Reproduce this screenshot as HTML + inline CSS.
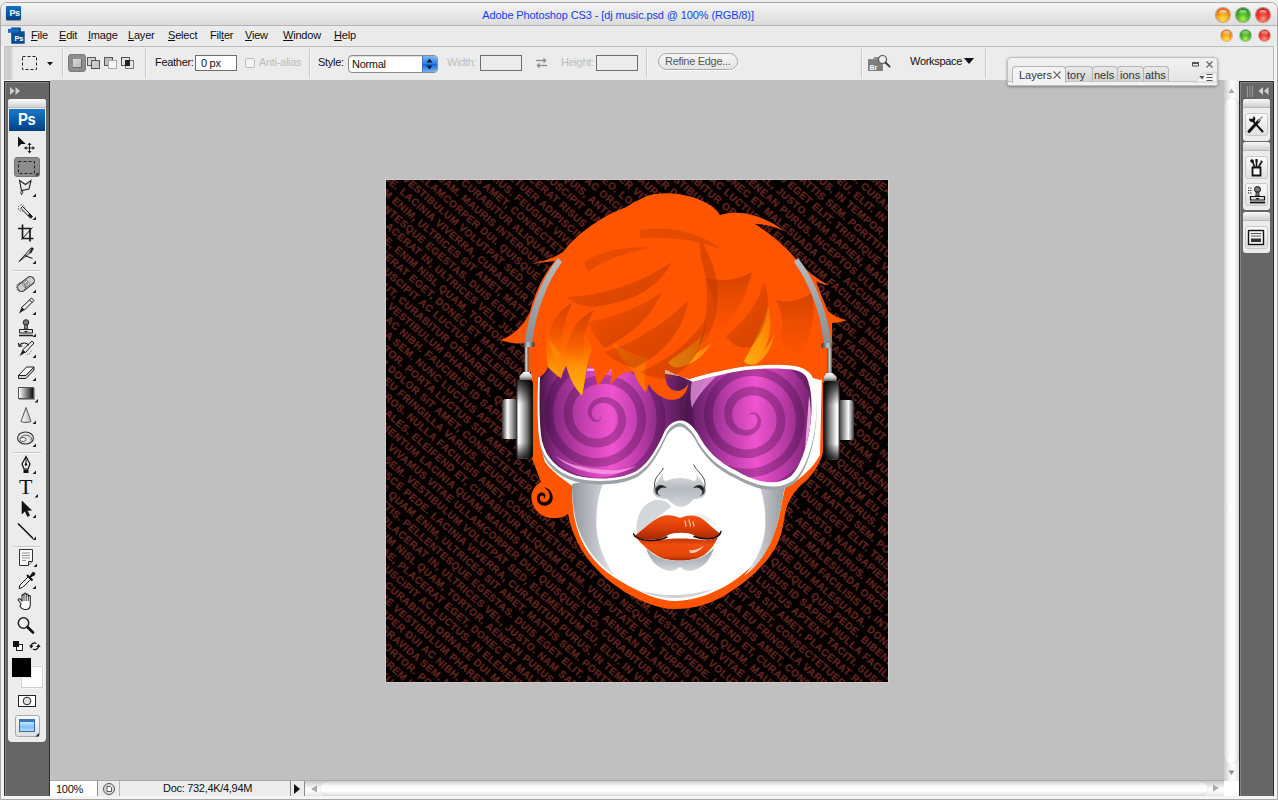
<!DOCTYPE html>
<html><head><meta charset="utf-8"><title>Adobe Photoshop CS3</title>
<style>
*{box-sizing:border-box;margin:0;padding:0}
html,body{width:1278px;height:800px;overflow:hidden;background:#fff;font-family:"Liberation Sans",sans-serif;font-size:11px;color:#000}
#win{position:absolute;left:0;top:0;width:1278px;height:800px;background:#ececec;overflow:hidden}
.abs{position:absolute}
#frame{position:absolute;left:0;top:2px;width:1278px;height:798px;border:1px solid #a8a8a8;border-radius:7px 7px 0 0;background:#f4f4f4;overflow:hidden}
#title{position:absolute;left:0;top:0;width:1278px;height:26px;}
#titlebg{position:absolute;left:1px;top:3px;width:1276px;height:23px;background:linear-gradient(#f4f4f4,#e9e9e9 45%,#dcdcdc);border-radius:6px 6px 0 0;border-bottom:1px solid #b4b4b4}
#ttext{position:absolute;left:0;top:9px;width:1236px;text-align:center;color:#1040f0;font-size:11px;letter-spacing:-0.12px}
#menubar{position:absolute;left:1px;top:26px;width:1276px;height:20px;background:#ebebeb}
.mi{position:absolute;top:29px;font-size:11px;color:#111;letter-spacing:-0.2px}
.mi u{text-decoration:underline}
#opt{position:absolute;left:4px;top:46px;width:1270px;height:34px;background:#ececec;border-left:1px solid #bcbcbc;border-right:1px solid #bcbcbc;border-top:1px solid #bcbcbc}
#work{position:absolute;left:50px;top:80px;width:1174px;height:701px;background:#c0c0c0}
#ltb{position:absolute;left:4px;top:81px;width:46px;height:715px;background:#666;border:1px solid #2c2c2c;border-bottom:none;box-shadow:inset 1px 1px 0 #858585}
#rdock{position:absolute;left:1239px;top:81px;width:35px;height:715px;background:#666;border:1px solid #2c2c2c;border-bottom:none;box-shadow:inset 1px 1px 0 #858585}
.btn3{position:absolute;border-radius:50%}
.lbl{position:absolute;font-size:11px;color:#111;white-space:nowrap;letter-spacing:-0.3px}
.dis{color:#bdbdbd}
.sep{position:absolute;top:49px;width:1px;height:29px;background:#c9c9c9;border-right:1px solid #f8f8f8;box-sizing:content-box}
.tab{background:linear-gradient(#e9e9e9,#d4d4d4);border:1px solid #b5b5b5;border-bottom:none;border-radius:4px 4px 0 0}
.hs{left:13px;width:28px;height:1px;background:#c6c6c6;border-bottom:1px solid #fafafa;box-sizing:content-box}
.rg{left:1243px;width:27px;background:#ececec;border-radius:3px}
.rgh{left:1243px;width:27px;height:9px;background:linear-gradient(#f8f8f8,#cfcfcf);border-radius:3px 3px 0 0;border-bottom:1px solid #b8b8b8}
.rb{left:1245px;width:23px;height:23px;background:linear-gradient(#fbfbfb,#e0e0e0);border:1px solid #c9c9c9;border-radius:3px}
</style></head><body>
<div id="win">
<div id="frame"></div>
<div id="titlebg"></div>
<!-- title Ps icon -->
<div class="abs" style="left:6px;top:6px;width:15px;height:14px;background:linear-gradient(#1474c4,#0a56a0 55%,#064487);border-radius:1px;box-shadow:0 1px 1px rgba(0,0,0,.35)"></div>
<div class="abs" style="left:9.500px;top:7.500px;font-size:9px;font-weight:bold;color:#fff;letter-spacing:-0.6px">Ps</div>
<div id="ttext">Adobe Photoshop CS3 - [dj music.psd @ 100% (RGB/8)]</div>
<div id="menubar"></div>

<!-- window buttons big -->
<div class="btn3" style="left:1216px;top:8px;width:14px;height:14px;background:radial-gradient(circle at 50% 78%,#ffe84a 0%,#f7a51c 40%,#e2660d 75%,#b94a08 100%);box-shadow:0 0 0 1px rgba(150,90,40,.55),0 1px 1px rgba(255,255,255,.9)"></div>
<div class="btn3" style="left:1236px;top:8px;width:14px;height:14px;background:radial-gradient(circle at 50% 78%,#b6f04e 0%,#4fba25 40%,#23901a 75%,#14690f 100%);box-shadow:0 0 0 1px rgba(40,110,40,.55),0 1px 1px rgba(255,255,255,.9)"></div>
<div class="btn3" style="left:1256px;top:8px;width:14px;height:14px;background:radial-gradient(circle at 50% 78%,#ff9a7a 0%,#ef3a2c 40%,#cc1d18 75%,#9c100e 100%);box-shadow:0 0 0 1px rgba(150,40,40,.55),0 1px 1px rgba(255,255,255,.9)"></div>
<div class="btn3" style="left:1219px;top:10px;width:8px;height:4px;background:linear-gradient(rgba(255,255,255,.75),rgba(255,255,255,.1));border-radius:50%"></div>
<div class="btn3" style="left:1239px;top:10px;width:8px;height:4px;background:linear-gradient(rgba(255,255,255,.65),rgba(255,255,255,.1));border-radius:50%"></div>
<div class="btn3" style="left:1259px;top:10px;width:8px;height:4px;background:linear-gradient(rgba(255,255,255,.65),rgba(255,255,255,.1));border-radius:50%"></div>
<!-- window buttons small -->
<div class="btn3" style="left:1221px;top:30px;width:11px;height:11px;background:radial-gradient(circle at 50% 80%,#ffe84a 0%,#f7a51c 40%,#e2660d 78%,#b94a08 100%);box-shadow:0 0 0 1px rgba(170,110,60,.45)"></div>
<div class="btn3" style="left:1240px;top:30px;width:11px;height:11px;background:radial-gradient(circle at 50% 80%,#b6f04e 0%,#4fba25 40%,#23901a 78%,#14690f 100%);box-shadow:0 0 0 1px rgba(60,130,60,.45)"></div>
<div class="btn3" style="left:1259px;top:30px;width:11px;height:11px;background:radial-gradient(circle at 50% 80%,#ff9a7a 0%,#ef3a2c 40%,#cc1d18 78%,#9c100e 100%);box-shadow:0 0 0 1px rgba(170,60,60,.45)"></div>
<div class="btn3" style="left:1223px;top:31px;width:7px;height:4px;background:linear-gradient(rgba(255,255,255,.7),rgba(255,255,255,.1))"></div>
<div class="btn3" style="left:1242px;top:31px;width:7px;height:4px;background:linear-gradient(rgba(255,255,255,.6),rgba(255,255,255,.1))"></div>
<div class="btn3" style="left:1261px;top:31px;width:7px;height:4px;background:linear-gradient(rgba(255,255,255,.6),rgba(255,255,255,.1))"></div>
<!-- menu doc icon -->
<svg class="abs" style="left:8px;top:27px" width="18" height="18" viewBox="0 0 18 18">
<path d="M3.200 0.400h9.600l3.900 3.900v12.400H3.200z" fill="#0a4d94"/>
<path d="M12.800 0.400l3.900 3.900h-3.900z" fill="#f2f6fb"/>
<rect x="0" y="1.900" width="10.500" height="3.900" fill="#1668c0"/>
<text x="6.600" y="14" font-family="Liberation Sans,sans-serif" font-size="7.500" font-weight="bold" fill="#fff" letter-spacing="-0.3">Ps</text>
</svg>
<div class="mi" style="left:31px"><u>F</u>ile</div>
<div class="mi" style="left:59px"><u>E</u>dit</div>
<div class="mi" style="left:88px"><u>I</u>mage</div>
<div class="mi" style="left:128px"><u>L</u>ayer</div>
<div class="mi" style="left:168px"><u>S</u>elect</div>
<div class="mi" style="left:210px">Fil<u>t</u>er</div>
<div class="mi" style="left:245px"><u>V</u>iew</div>
<div class="mi" style="left:283px"><u>W</u>indow</div>
<div class="mi" style="left:334px"><u>H</u>elp</div>
<div id="opt"></div>

<!-- options bar -->
<div class="abs" style="left:5px;top:47px;width:8px;height:33px;background:linear-gradient(90deg,#d6d6d6,#c9c9c9 50%,#e0e0e0)"></div>
<svg class="abs" style="left:20px;top:54px" width="36" height="20" viewBox="0 0 36 20">
<rect x="2.5" y="2.5" width="14" height="13" fill="none" stroke="#222" stroke-width="1" stroke-dasharray="3 2"/>
<path d="M27 8h6l-3 3.5z" fill="#111"/>
</svg>
<div class="sep" style="left:62px"></div>
<div class="abs" style="left:68px;top:54px;width:18px;height:18px;background:#8e8e8e;border-radius:3px;border:1px solid #7a7a7a"></div>
<div class="abs" style="left:73px;top:59px;width:9px;height:9px;background:linear-gradient(135deg,#dcdcdc,#b9b9b9);border-right:1px solid #6a6a6a;border-bottom:1px solid #6a6a6a"></div>
<svg class="abs" style="left:86px;top:54px" width="52" height="20" viewBox="0 0 52 20">
<g stroke="#555" stroke-width="1">
<rect x="1.5" y="3.5" width="8" height="8" fill="#d4d4d4"/><rect x="5.5" y="6.5" width="8" height="8" fill="#c8c8c8"/>
<path d="M6 7h3.5v5H6z" fill="#cfcfcf" stroke="none"/>
<rect x="18.500" y="3.500" width="8" height="8" fill="#bdbdbd"/><rect x="22.500" y="6.500" width="8" height="8" fill="#f4f4f4" stroke="#aaa"/>
<rect x="35.500" y="3.500" width="8" height="8" fill="#e4e4e4"/><rect x="39.500" y="6.500" width="8" height="8" fill="#e9e9e9" stroke="#777"/>
<rect x="39" y="6" width="5" height="6" fill="#222" stroke="none"/>
</g></svg>
<div class="sep" style="left:145px"></div>
<div class="lbl" style="left:155px;top:56px">Feather:</div>
<div class="abs" style="left:195px;top:55px;width:42px;height:16px;background:#fff;border:1px solid #6e6e6e"></div>
<div class="lbl" style="left:201px;top:57px">0 px</div>
<div class="abs" style="left:245px;top:58px;width:10px;height:10px;background:#f4f4f4;border:1px solid #bdbdbd;border-radius:2px"></div>
<div class="lbl dis" style="left:259px;top:56px">Anti-alias</div>
<div class="sep" style="left:309px"></div>
<div class="lbl" style="left:318px;top:56px">Style:</div>
<div class="abs" style="left:348px;top:55px;width:90px;height:18px;background:#fff;border:1px solid #8a8a8a;border-radius:4px;box-shadow:inset 0 1px 1px rgba(0,0,0,.15)"></div>
<div class="lbl" style="left:352px;top:58px">Normal</div>
<div class="abs" style="left:422px;top:56px;width:15px;height:16px;background:linear-gradient(#7db7f2,#2f82e0 48%,#1565d2 52%,#6fb5f5);border-radius:0 4px 4px 0;border-left:1px solid #3b74c2"></div>
<svg class="abs" style="left:422px;top:56px" width="15" height="16" viewBox="0 0 15 16"><path d="M7.500 2.500l3 4h-6zM7.500 13.500l3-4h-6z" fill="#0b1a33"/></svg>
<div class="lbl dis" style="left:447px;top:56px">Width:</div>
<div class="abs" style="left:480px;top:55px;width:42px;height:16px;background:#ececec;border:1px solid #6e6e6e"></div>
<svg class="abs" style="left:534px;top:56px" width="15" height="14" viewBox="0 0 15 14"><g stroke="#8a8a8a" stroke-width="1.3" fill="#8a8a8a"><path d="M2 4.500h9" /><path d="M9.500 1.500l3 3-3 3z" stroke="none"/><path d="M13 9.500H4"/><path d="M5.500 6.500l-3 3 3 3z" stroke="none"/></g></svg>
<div class="lbl dis" style="left:561px;top:56px">Height:</div>
<div class="abs" style="left:596px;top:55px;width:42px;height:16px;background:#ececec;border:1px solid #6e6e6e"></div>
<div class="sep" style="left:646px"></div>
<div class="abs" style="left:658px;top:53px;width:80px;height:17px;background:linear-gradient(#f6f6f6,#e4e4e4);border:1px solid #a9a9a9;border-radius:9px;box-shadow:0 1px 0 #fff"></div>
<div class="lbl" style="left:665px;top:55px;color:#555">Refine Edge...</div>
<div class="sep" style="left:861px"></div>
<svg class="abs" style="left:866px;top:53px" width="26" height="20" viewBox="0 0 26 20">
<path d="M2 6h5l1.500-2h5.500v3h3v11H2z" fill="#8d8d8d"/>
<rect x="2" y="7" width="14" height="11" fill="#7d7d7d"/>
<text x="3.500" y="16.500" font-family="Liberation Sans,sans-serif" font-size="7" font-weight="bold" fill="#fff">Br</text>
<circle cx="16.500" cy="6.500" r="4" fill="#f0f0f0" stroke="#555" stroke-width="1.200"/>
<path d="M19.500 9.500l4 4" stroke="#444" stroke-width="2" stroke-linecap="round"/>
</svg>
<div class="lbl" style="left:910px;top:55px">Workspace</div>
<svg class="abs" style="left:963px;top:57px" width="12" height="8" viewBox="0 0 12 8"><path d="M1 1h10l-5 6z" fill="#111"/></svg>
<div class="sep" style="left:985px"></div>
<div id="work"></div>

<!--ART-->
<svg class="abs" style="left:386px;top:180px;box-shadow:0 0 0 1px #cdcdcd" width="502" height="502" viewBox="386 180 502 502">
<defs>
<clipPath id="cv"><rect x="386" y="180" width="502" height="502"/></clipPath>
<clipPath id="cg"><path d="M540.5 367 C539 395 539 424 542 441 C546 458 558 469.5 576 475.5 C596 480.5 621 479.5 636.5 471 C649.5 463 658 446 665 430.5 C669 424 675 420.5 680 420.5 C687 420 693 426 698 434 C706 450 718 462 737 471 C752 480 774 488.500 791 476 C800 467 806 449 809.500 431 C812.500 412 812.500 394 808 381 C806 373 798 369 784 369 C770 368 755 369 746 370 C731 372 711 377 693 382 L680 376 L600 364 Z"/></clipPath>
<linearGradient id="gg" gradientUnits="userSpaceOnUse" x1="540" x2="815" y1="0" y2="0">
<stop offset="0" stop-color="#4a1848"/><stop offset=".06" stop-color="#8a2a84"/><stop offset=".16" stop-color="#c440b0"/><stop offset=".26" stop-color="#f054d0"/><stop offset=".36" stop-color="#bc3cac"/><stop offset=".455" stop-color="#7a2678"/><stop offset=".52" stop-color="#521a52"/><stop offset=".58" stop-color="#742474"/><stop offset=".67" stop-color="#b23aa4"/><stop offset=".785" stop-color="#f054d0"/><stop offset=".89" stop-color="#b83aa6"/><stop offset="1" stop-color="#6a2068"/></linearGradient>
<linearGradient id="yl" x1="0" x2="0" y1="0" y2="1"><stop offset="0" stop-color="#ff5400"/><stop offset=".35" stop-color="#ff6c00"/><stop offset=".65" stop-color="#ff9a06"/><stop offset="1" stop-color="#ffb414"/></linearGradient>
<linearGradient id="yl2" x1="1" x2="0" y1="0" y2="1"><stop offset="0" stop-color="#ff6a00"/><stop offset=".5" stop-color="#ff9406"/><stop offset="1" stop-color="#ffae10"/></linearGradient>
<linearGradient id="lg" x1="0" x2="1" y1="0" y2="0"><stop offset="0" stop-color="#5a1858"/><stop offset=".2" stop-color="#8a2a86"/><stop offset=".55" stop-color="#b23ca4"/><stop offset=".85" stop-color="#8e2e8a"/><stop offset="1" stop-color="#6a1e68"/></linearGradient>
<linearGradient id="lg2" x1="0" x2="1" y1="0" y2="0"><stop offset="0" stop-color="#6a1e68"/><stop offset=".25" stop-color="#92308e"/><stop offset=".55" stop-color="#b43ea6"/><stop offset=".85" stop-color="#963290"/><stop offset="1" stop-color="#7c267a"/></linearGradient>
<linearGradient id="cup" x1="0" x2="1"><stop offset="0" stop-color="#2a2a2a"/><stop offset=".06" stop-color="#555"/><stop offset=".12" stop-color="#fff"/><stop offset=".24" stop-color="#f0f0f0"/><stop offset=".4" stop-color="#c0c0c0"/><stop offset=".65" stop-color="#7a7a7a"/><stop offset=".86" stop-color="#2c2c2c"/><stop offset="1" stop-color="#0c0c0c"/></linearGradient>
<linearGradient id="cupv" x1="0" x2="0" y1="0" y2="1"><stop offset="0" stop-color="#000" stop-opacity=".85"/><stop offset=".12" stop-color="#000" stop-opacity=".55"/><stop offset=".3" stop-color="#000" stop-opacity="0"/><stop offset=".8" stop-color="#000" stop-opacity="0"/><stop offset=".93" stop-color="#000" stop-opacity=".55"/><stop offset="1" stop-color="#000" stop-opacity=".8"/></linearGradient>
<linearGradient id="ring" x1="0" x2="1"><stop offset="0" stop-color="#444"/><stop offset=".4" stop-color="#ccc"/><stop offset="1" stop-color="#333"/></linearGradient>
<linearGradient id="conn" x1="0" x2="0" y1="0" y2="1"><stop offset="0" stop-color="#fff"/><stop offset=".5" stop-color="#cfcfcf"/><stop offset="1" stop-color="#555"/></linearGradient>
<linearGradient id="cupr" x1="1" x2="0"><stop offset="0" stop-color="#4a4a4a"/><stop offset=".1" stop-color="#a0a0a0"/><stop offset=".26" stop-color="#ffffff"/><stop offset=".44" stop-color="#a4a4a4"/><stop offset=".6" stop-color="#4a4a4a"/><stop offset=".74" stop-color="#141414"/><stop offset="1" stop-color="#1c1c1c"/></linearGradient>
<linearGradient id="disc" x1="0" x2="1"><stop offset="0" stop-color="#333"/><stop offset=".12" stop-color="#777"/><stop offset=".35" stop-color="#fafafa"/><stop offset=".6" stop-color="#a8a8a8"/><stop offset=".85" stop-color="#555"/><stop offset="1" stop-color="#2a2a2a"/></linearGradient>
<linearGradient id="stem" x1="0" x2="1"><stop offset="0" stop-color="#555"/><stop offset=".4" stop-color="#d8d8d8"/><stop offset="1" stop-color="#5a5a5a"/></linearGradient>
<linearGradient id="hbg" x1="0" x2="0" y1="0" y2="1"><stop offset="0" stop-color="#b8bcc0"/><stop offset="1" stop-color="#8a8e92"/></linearGradient>
<linearGradient id="dk1" x1="0" x2="1" y1="0" y2="1"><stop offset="0" stop-color="#9a2c00" stop-opacity="0"/><stop offset=".6" stop-color="#a83200" stop-opacity=".38"/><stop offset="1" stop-color="#b43800" stop-opacity=".55"/></linearGradient>
<linearGradient id="dk2" x1="0" x2="0" y1="0" y2="1"><stop offset="0" stop-color="#a83200" stop-opacity=".5"/><stop offset="1" stop-color="#c84000" stop-opacity="0"/></linearGradient>
<linearGradient id="chin" x1="0" x2="0" y1="0" y2="1"><stop offset="0" stop-color="#9aa0a6"/><stop offset=".6" stop-color="#b4bac0"/><stop offset="1" stop-color="#d4d8dc"/></linearGradient>
<linearGradient id="lip" x1="0" x2="0" y1="0" y2="1"><stop offset="0" stop-color="#f65010"/><stop offset=".5" stop-color="#dc3e08"/><stop offset="1" stop-color="#a42800"/></linearGradient>
<linearGradient id="lip2" x1="0" x2="0" y1="0" y2="1"><stop offset="0" stop-color="#b83004"/><stop offset=".35" stop-color="#f04e0e"/><stop offset=".8" stop-color="#e04408"/><stop offset="1" stop-color="#a62a02"/></linearGradient>
<linearGradient id="shL" x1="0" x2="1"><stop offset="0" stop-color="#90969c"/><stop offset=".5" stop-color="#bcc0c5"/><stop offset=".9" stop-color="#dfe2e5"/><stop offset="1" stop-color="#eef0f1"/></linearGradient>
<linearGradient id="shR" x1="1" x2="0"><stop offset="0" stop-color="#90969c"/><stop offset=".5" stop-color="#bcc0c5"/><stop offset=".9" stop-color="#dfe2e5"/><stop offset="1" stop-color="#eef0f1"/></linearGradient>
<linearGradient id="nose" x1="0" x2="0" y1="0" y2="1"><stop offset="0" stop-color="#e9ebed"/><stop offset=".5" stop-color="#b4bac0"/><stop offset="1" stop-color="#d4d8dc"/></linearGradient>
<linearGradient id="fr" x1="0" x2="0" y1="0" y2="1"><stop offset="0" stop-color="#ff5400"/><stop offset=".6" stop-color="#ff5a00"/><stop offset="1" stop-color="#ff7a00"/></linearGradient>
</defs>
<g clip-path="url(#cv)">
<rect x="386" y="180" width="502" height="502" fill="#040000"/>
<g transform="translate(637 431) rotate(41)" font-family="Liberation Sans,sans-serif" font-weight="bold" font-size="10.1" fill="#5e241e" stroke="#5e241e" stroke-width="0.3" letter-spacing="0.5"><text x="-372" y="-389.4">LOREM IPSUM DOLOR SIT AMET, CONSECTETUER ADIPISCING ELIT. MAECENAS NIBH. VIVAMUS VITAE ULLAMCORPER DUI. QUISQUE LEO. CURABITUR</text>
<text x="-372" y="-377.6">ORCI EU NULLA EU FRINGILLA VARIUS. FEUGIAT VIVERRA, MASSA UT VITAE SEM. VESTIBULUM VOLUTPAT SED, ELEMENTUM EU, ELIT. IN VULPUTATE,</text>
<text x="-372" y="-365.8">ANTE. NON, EROS. NULLA FACILISIS AMET, CONSECTETUER ELIT ODIO NEQUE. FUSCE PEDE. LACINIA VIVERRA, CURABITUR PURUS. IN TEMPOR,</text>
<text x="-372" y="-354.0">ET, DONEC SODALES. ELEIFEND ET, CURABITUR ALIQUAM DIAM. VULPUTATE VEL, TURPIS QUAM ENIM, ULTRICES SIT AMET, MATTIS SEM. PORTTITOR</text>
<text x="-372" y="-342.2">NON ELIT. ELEMENTUM LACINIA QUAM. MAURIS INTERDUM TELLUS. AENEAN BLANDIT MATTIS. PELLENTESQUE EGESTAS. DUIS EGET ELIT. TRISTIQUE</text>
<text x="-372" y="-330.4">MAECENAS NIBH. VIVAMUS VITAE ULLAMCORPER DUI. QUISQUE LEO. CURABITUR ETIAM AT ENIM. PLACERAT IN, ULTRICES VEL, JUSTO. NAM SAPIEN,</text>
<text x="-372" y="-318.6">MASSA UT VITAE SEM. VESTIBULUM VOLUTPAT SED, ELEMENTUM EU, ELIT. IN VULPUTATE, ENIM NISL QUAM, TORTOR. AENEAN PURUS. INCEPTOS</text>
<text x="-372" y="-306.8">ODIO NEQUE. FUSCE PEDE. LACINIA VIVERRA, CURABITUR PURUS. IN TEMPOR, TINCIDUNT VITAE, PLACERAT EGET, DONEC ET MALESUADA ORCI.</text>
<text x="-372" y="-295.0">VULPUTATE VEL, TURPIS QUAM ENIM, ULTRICES SIT AMET, MATTIS SEM. PORTTITOR TEMPOR UT, SUSCIPIT AC LUCTUS. IN ELEMENTUM FACILISIS</text>
<text x="-372" y="-283.2">AENEAN BLANDIT MATTIS. PELLENTESQUE EGESTAS. DUIS EGET ELIT. TRISTIQUE VELIT AC TURPIS. JUSTO UT, CURABITUR ORNARE DUI MALESUADA.</text>
<text x="-372" y="-271.4">CURABITUR ETIAM AT ENIM. PLACERAT IN, ULTRICES VEL, JUSTO. NAM SAPIEN, MAURIS POSUERE VESTIBULUM PHARETRA. QUISQUE QUIS PEDE.</text>
<text x="-372" y="-259.6">EU, ELIT. IN VULPUTATE, ENIM NISL QUAM, TORTOR. AENEAN PURUS. INCEPTOS ULLAMCORPER DUI AC NIBH. FAUCIBUS ID SAPIEN NULLA FACILISI.</text>
<text x="-372" y="-247.8">IN TEMPOR, TINCIDUNT VITAE, PLACERAT EGET, DONEC ET MALESUADA ORCI. ACCUMSAN VEL, MAURIS. GRAVIDA SEM. NUNC LUCTUS APTENT TACITI.</text>
<text x="-372" y="-236.0">MATTIS SEM. PORTTITOR TEMPOR UT, SUSCIPIT AC LUCTUS. IN ELEMENTUM FACILISIS ID, INTEGER VITAE TORTOR. PORTA LUCTUS SIT AMET, PLACERAT</text>
<text x="-372" y="-224.2">TRISTIQUE VELIT AC TURPIS. JUSTO UT, CURABITUR ORNARE DUI MALESUADA. DONEC NUNC LEO. LOREM IPSUM DOLOR SIT AMET, CONSECTETUER</text>
<text x="-372" y="-212.4">JUSTO. NAM SAPIEN, MAURIS POSUERE VESTIBULUM PHARETRA. QUISQUE QUIS PEDE. BIBENDUM METUS AC ORCI EU NULLA EU FRINGILLA VARIUS.</text>
<text x="-372" y="-200.6">AENEAN PURUS. INCEPTOS ULLAMCORPER DUI AC NIBH. FAUCIBUS ID SAPIEN NULLA FACILISI. QUIS, ANTE. NON, EROS. NULLA FACILISIS AMET,</text>
<text x="-372" y="-188.8">MALESUADA ORCI. ACCUMSAN VEL, MAURIS. GRAVIDA SEM. NUNC LUCTUS APTENT TACITI. SUSCIPIT DIAM ET, DONEC SODALES. ELEIFEND ET, CURABITUR</text>
<text x="-372" y="-177.0">IN ELEMENTUM FACILISIS ID, INTEGER VITAE TORTOR. PORTA LUCTUS SIT AMET, PLACERAT RISUS NON ELIT. ELEMENTUM LACINIA QUAM. MAURIS</text>
<text x="-372" y="-165.2">DUI MALESUADA. DONEC NUNC LEO. LOREM IPSUM DOLOR SIT AMET, CONSECTETUER ADIPISCING ELIT. MAECENAS NIBH. VIVAMUS VITAE ULLAMCORPER</text>
<text x="-372" y="-153.4">QUIS PEDE. BIBENDUM METUS AC ORCI EU NULLA EU FRINGILLA VARIUS. FEUGIAT VIVERRA, MASSA UT VITAE SEM. VESTIBULUM VOLUTPAT SED,</text>
<text x="-372" y="-141.6">ID SAPIEN NULLA FACILISI. QUIS, ANTE. NON, EROS. NULLA FACILISIS AMET, CONSECTETUER ELIT ODIO NEQUE. FUSCE PEDE. LACINIA VIVERRA,</text>
<text x="-372" y="-129.8">LUCTUS APTENT TACITI. SUSCIPIT DIAM ET, DONEC SODALES. ELEIFEND ET, CURABITUR ALIQUAM DIAM. VULPUTATE VEL, TURPIS QUAM ENIM, ULTRICES</text>
<text x="-372" y="-118.0">LUCTUS SIT AMET, PLACERAT RISUS NON ELIT. ELEMENTUM LACINIA QUAM. MAURIS INTERDUM TELLUS. AENEAN BLANDIT MATTIS. PELLENTESQUE</text>
<text x="-372" y="-106.2">SIT AMET, CONSECTETUER ADIPISCING ELIT. MAECENAS NIBH. VIVAMUS VITAE ULLAMCORPER DUI. QUISQUE LEO. CURABITUR ETIAM AT ENIM. PLACERAT</text>
<text x="-372" y="-94.4">EU FRINGILLA VARIUS. FEUGIAT VIVERRA, MASSA UT VITAE SEM. VESTIBULUM VOLUTPAT SED, ELEMENTUM EU, ELIT. IN VULPUTATE, ENIM NISL</text>
<text x="-372" y="-82.6">NULLA FACILISIS AMET, CONSECTETUER ELIT ODIO NEQUE. FUSCE PEDE. LACINIA VIVERRA, CURABITUR PURUS. IN TEMPOR, TINCIDUNT VITAE,</text>
<text x="-372" y="-70.8">ELEIFEND ET, CURABITUR ALIQUAM DIAM. VULPUTATE VEL, TURPIS QUAM ENIM, ULTRICES SIT AMET, MATTIS SEM. PORTTITOR TEMPOR UT, SUSCIPIT</text>
<text x="-372" y="-59.0">LACINIA QUAM. MAURIS INTERDUM TELLUS. AENEAN BLANDIT MATTIS. PELLENTESQUE EGESTAS. DUIS EGET ELIT. TRISTIQUE VELIT AC TURPIS.</text>
<text x="-372" y="-47.2">VITAE ULLAMCORPER DUI. QUISQUE LEO. CURABITUR ETIAM AT ENIM. PLACERAT IN, ULTRICES VEL, JUSTO. NAM SAPIEN, MAURIS POSUERE VESTIBULUM</text>
<text x="-372" y="-35.4">SEM. VESTIBULUM VOLUTPAT SED, ELEMENTUM EU, ELIT. IN VULPUTATE, ENIM NISL QUAM, TORTOR. AENEAN PURUS. INCEPTOS ULLAMCORPER DUI</text>
<text x="-372" y="-23.6">PEDE. LACINIA VIVERRA, CURABITUR PURUS. IN TEMPOR, TINCIDUNT VITAE, PLACERAT EGET, DONEC ET MALESUADA ORCI. ACCUMSAN VEL, MAURIS.</text>
<text x="-372" y="-11.8">QUAM ENIM, ULTRICES SIT AMET, MATTIS SEM. PORTTITOR TEMPOR UT, SUSCIPIT AC LUCTUS. IN ELEMENTUM FACILISIS ID, INTEGER VITAE TORTOR.</text>
<text x="-372" y="0.0">PELLENTESQUE EGESTAS. DUIS EGET ELIT. TRISTIQUE VELIT AC TURPIS. JUSTO UT, CURABITUR ORNARE DUI MALESUADA. DONEC NUNC LEO. LOREM</text>
<text x="-372" y="11.8">ENIM. PLACERAT IN, ULTRICES VEL, JUSTO. NAM SAPIEN, MAURIS POSUERE VESTIBULUM PHARETRA. QUISQUE QUIS PEDE. BIBENDUM METUS AC ORCI</text>
<text x="-372" y="23.6">VULPUTATE, ENIM NISL QUAM, TORTOR. AENEAN PURUS. INCEPTOS ULLAMCORPER DUI AC NIBH. FAUCIBUS ID SAPIEN NULLA FACILISI. QUIS, ANTE.</text>
<text x="-372" y="35.4">VITAE, PLACERAT EGET, DONEC ET MALESUADA ORCI. ACCUMSAN VEL, MAURIS. GRAVIDA SEM. NUNC LUCTUS APTENT TACITI. SUSCIPIT DIAM ET,</text>
<text x="-372" y="47.2">TEMPOR UT, SUSCIPIT AC LUCTUS. IN ELEMENTUM FACILISIS ID, INTEGER VITAE TORTOR. PORTA LUCTUS SIT AMET, PLACERAT RISUS NON ELIT.</text>
<text x="-372" y="59.0">TURPIS. JUSTO UT, CURABITUR ORNARE DUI MALESUADA. DONEC NUNC LEO. LOREM IPSUM DOLOR SIT AMET, CONSECTETUER ADIPISCING ELIT. MAECENAS</text>
<text x="-372" y="70.8">MAURIS POSUERE VESTIBULUM PHARETRA. QUISQUE QUIS PEDE. BIBENDUM METUS AC ORCI EU NULLA EU FRINGILLA VARIUS. FEUGIAT VIVERRA, MASSA</text>
<text x="-372" y="82.6">ULLAMCORPER DUI AC NIBH. FAUCIBUS ID SAPIEN NULLA FACILISI. QUIS, ANTE. NON, EROS. NULLA FACILISIS AMET, CONSECTETUER ELIT ODIO</text>
<text x="-372" y="94.4">VEL, MAURIS. GRAVIDA SEM. NUNC LUCTUS APTENT TACITI. SUSCIPIT DIAM ET, DONEC SODALES. ELEIFEND ET, CURABITUR ALIQUAM DIAM. VULPUTATE</text>
<text x="-372" y="106.2">ID, INTEGER VITAE TORTOR. PORTA LUCTUS SIT AMET, PLACERAT RISUS NON ELIT. ELEMENTUM LACINIA QUAM. MAURIS INTERDUM TELLUS. AENEAN</text>
<text x="-372" y="118.0">NUNC LEO. LOREM IPSUM DOLOR SIT AMET, CONSECTETUER ADIPISCING ELIT. MAECENAS NIBH. VIVAMUS VITAE ULLAMCORPER DUI. QUISQUE LEO.</text>
<text x="-372" y="129.8">METUS AC ORCI EU NULLA EU FRINGILLA VARIUS. FEUGIAT VIVERRA, MASSA UT VITAE SEM. VESTIBULUM VOLUTPAT SED, ELEMENTUM EU, ELIT.</text>
<text x="-372" y="141.6">FACILISI. QUIS, ANTE. NON, EROS. NULLA FACILISIS AMET, CONSECTETUER ELIT ODIO NEQUE. FUSCE PEDE. LACINIA VIVERRA, CURABITUR PURUS.</text>
<text x="-372" y="153.4">SUSCIPIT DIAM ET, DONEC SODALES. ELEIFEND ET, CURABITUR ALIQUAM DIAM. VULPUTATE VEL, TURPIS QUAM ENIM, ULTRICES SIT AMET, MATTIS</text>
<text x="-372" y="165.2">PLACERAT RISUS NON ELIT. ELEMENTUM LACINIA QUAM. MAURIS INTERDUM TELLUS. AENEAN BLANDIT MATTIS. PELLENTESQUE EGESTAS. DUIS EGET</text>
<text x="-372" y="177.0">ADIPISCING ELIT. MAECENAS NIBH. VIVAMUS VITAE ULLAMCORPER DUI. QUISQUE LEO. CURABITUR ETIAM AT ENIM. PLACERAT IN, ULTRICES VEL,</text>
<text x="-372" y="188.8">FEUGIAT VIVERRA, MASSA UT VITAE SEM. VESTIBULUM VOLUTPAT SED, ELEMENTUM EU, ELIT. IN VULPUTATE, ENIM NISL QUAM, TORTOR. AENEAN</text>
<text x="-372" y="200.6">CONSECTETUER ELIT ODIO NEQUE. FUSCE PEDE. LACINIA VIVERRA, CURABITUR PURUS. IN TEMPOR, TINCIDUNT VITAE, PLACERAT EGET, DONEC ET</text>
<text x="-372" y="212.4">ALIQUAM DIAM. VULPUTATE VEL, TURPIS QUAM ENIM, ULTRICES SIT AMET, MATTIS SEM. PORTTITOR TEMPOR UT, SUSCIPIT AC LUCTUS. IN ELEMENTUM</text>
<text x="-372" y="224.2">INTERDUM TELLUS. AENEAN BLANDIT MATTIS. PELLENTESQUE EGESTAS. DUIS EGET ELIT. TRISTIQUE VELIT AC TURPIS. JUSTO UT, CURABITUR ORNARE</text>
<text x="-372" y="236.0">QUISQUE LEO. CURABITUR ETIAM AT ENIM. PLACERAT IN, ULTRICES VEL, JUSTO. NAM SAPIEN, MAURIS POSUERE VESTIBULUM PHARETRA. QUISQUE</text>
<text x="-372" y="247.8">SED, ELEMENTUM EU, ELIT. IN VULPUTATE, ENIM NISL QUAM, TORTOR. AENEAN PURUS. INCEPTOS ULLAMCORPER DUI AC NIBH. FAUCIBUS ID SAPIEN</text>
<text x="-372" y="259.6">CURABITUR PURUS. IN TEMPOR, TINCIDUNT VITAE, PLACERAT EGET, DONEC ET MALESUADA ORCI. ACCUMSAN VEL, MAURIS. GRAVIDA SEM. NUNC LUCTUS</text>
<text x="-372" y="271.4">SIT AMET, MATTIS SEM. PORTTITOR TEMPOR UT, SUSCIPIT AC LUCTUS. IN ELEMENTUM FACILISIS ID, INTEGER VITAE TORTOR. PORTA LUCTUS SIT</text>
<text x="-372" y="283.2">EGET ELIT. TRISTIQUE VELIT AC TURPIS. JUSTO UT, CURABITUR ORNARE DUI MALESUADA. DONEC NUNC LEO. LOREM IPSUM DOLOR SIT AMET, CONSECTETUER</text>
<text x="-372" y="295.0">ULTRICES VEL, JUSTO. NAM SAPIEN, MAURIS POSUERE VESTIBULUM PHARETRA. QUISQUE QUIS PEDE. BIBENDUM METUS AC ORCI EU NULLA EU FRINGILLA</text>
<text x="-372" y="306.8">QUAM, TORTOR. AENEAN PURUS. INCEPTOS ULLAMCORPER DUI AC NIBH. FAUCIBUS ID SAPIEN NULLA FACILISI. QUIS, ANTE. NON, EROS. NULLA</text>
<text x="-372" y="318.6">DONEC ET MALESUADA ORCI. ACCUMSAN VEL, MAURIS. GRAVIDA SEM. NUNC LUCTUS APTENT TACITI. SUSCIPIT DIAM ET, DONEC SODALES. ELEIFEND</text>
<text x="-372" y="330.4">AC LUCTUS. IN ELEMENTUM FACILISIS ID, INTEGER VITAE TORTOR. PORTA LUCTUS SIT AMET, PLACERAT RISUS NON ELIT. ELEMENTUM LACINIA</text>
<text x="-372" y="342.2">CURABITUR ORNARE DUI MALESUADA. DONEC NUNC LEO. LOREM IPSUM DOLOR SIT AMET, CONSECTETUER ADIPISCING ELIT. MAECENAS NIBH. VIVAMUS</text>
<text x="-372" y="354.0">PHARETRA. QUISQUE QUIS PEDE. BIBENDUM METUS AC ORCI EU NULLA EU FRINGILLA VARIUS. FEUGIAT VIVERRA, MASSA UT VITAE SEM. VESTIBULUM</text>
<text x="-372" y="365.8">NIBH. FAUCIBUS ID SAPIEN NULLA FACILISI. QUIS, ANTE. NON, EROS. NULLA FACILISIS AMET, CONSECTETUER ELIT ODIO NEQUE. FUSCE PEDE.</text>
<text x="-372" y="377.6">SEM. NUNC LUCTUS APTENT TACITI. SUSCIPIT DIAM ET, DONEC SODALES. ELEIFEND ET, CURABITUR ALIQUAM DIAM. VULPUTATE VEL, TURPIS QUAM</text>
<text x="-372" y="389.4">TORTOR. PORTA LUCTUS SIT AMET, PLACERAT RISUS NON ELIT. ELEMENTUM LACINIA QUAM. MAURIS INTERDUM TELLUS. AENEAN BLANDIT MATTIS.</text></g>
<!-- headband -->
<!-- head/hair base orange -->
<path d="M501 340 C512 336 524 326 530 312 C534 296 542 276 555 261 L529 264 C542 262 554 258 563 252 C580 230 610 210 640 203 L620 211 C630 204 640 199 647 196 C660 192 680 192 700 200 C710 204 716 209 720 215 C730 212 742 212 752 215 C764 218 776 224 784 231 C774 226 764 224 755 224 C768 232 785 246 797 260 C806 270 818 280 829 285 C824 285 819 283 816 281 C820 292 825 304 828 311 C834 316 840 319 847 320 C842 322 837 323 832 323
 L829 345 L829 373 L826 373 C826 400 825 435 823 452 C820 466 810 478 800 486 C792 494 787 504 785 514 C783.500 524 782 532 779 540 C772 558 752 580 722 597 C705 606 690 609 675 609 C660 609 640 602 622 590 C600 576 582 556 573 532 C571 525 569 520 568 514 C560 520 545 520 537 511 C528 501 530 488 541 482 C538 474 534 464 531 456 L531 372 L527 372 L527 343 C518 344 508 343 501 340 Z" fill="#ff5400"/>
<!-- curl hole -->
<path d="M541 492.500 C536.500 494 535.500 500 539 503.500 C543 507.500 550.500 506 552.500 500 C554 494 549.500 487.500 543 487 C548 489 550.500 493.500 549.500 498 C548.500 502 543.500 503.500 541 501 C539 499 539.500 496 542 495.500 C544 495.500 544.500 497.500 543.500 498.500 C546 498 546 494 543.500 493 C542.500 492.500 541.800 492.400 541 492.500 Z" fill="#120300"/>
<!-- face -->
<path d="M540 372 C538 400 538 440 545 462 C556 476 568 482 572 486 C572 500 573 515 577 528 C584 552 600 570 622 582 C640 593 660 601 675 601 C690 601 706 596 722 588 C748 574 768 552 777 525 C780.500 512 782 500 785 488 C796 482 812 470 820 455 L822 372 Z" fill="#fff"/>
<!-- face side shading -->
<path d="M572 484 C583 481 595 481 606 478 C599 490 595.500 508 596.500 528 C598 546 605 562 615 576 C599 565 585 548 578 528 C574 515 572 500 572 484 Z" fill="url(#shL)"/>
<path d="M786 486 C776 483 766 483 757 480 C763 492 766.500 510 765 530 C763 548 755 562 744 576 C759 565 772 546 777 525 C780.500 512 782 500 785 486 Z" fill="url(#shR)"/>
<!-- chin shadow line -->
<path d="M640 590 C660 597 690 597 715 588 C695 600 660 602 640 590 Z" fill="#cfd3d7"/>
<!-- nose -->
<path d="M664 470 C662 478 655 482 653 490 C653 497 660 499 667 499 C672 503 676 507 681 507 C686 507 690 503 694 499 C700 499 706 497 706 490 C705 482 697 478 695 470 C697 476 698 480 694 481 C686 477 674 477 666 481 C662 480 663 476 664 470 Z" fill="url(#nose)"/>
<path d="M656 488 C658 484 663 484 667 488 C664 487 660 487 658 491 C657 493 658 495 661 496 C656 495 654 492 656 488 Z" fill="#222"/>
<path d="M704 488 C702 484 697 484 693 488 C696 487 700 487 702 491 C703 493 702 495 699 496 C704 495 706 492 704 488 Z" fill="#222"/>
<path d="M663.500 468 C661 473 656 476 655 481 C654 485 654.500 489 656.500 492" fill="none" stroke="#4a4a4a" stroke-width="1"/>
<path d="M693.500 464.500 C696 470 702 474 704 479 C706 484 705 489 702 492.500" fill="none" stroke="#4a4a4a" stroke-width="1"/>
<!-- philtrum / mouth shadows -->
<path d="M637 534 C635 520 640 506 652 501 C660 498 668 501 671 507 C664 512 652 521 642 533 Z" fill="#d3d7db"/>
<path d="M692 516 C700 512 712 516 718 528 C712 522 702 517 692 516 Z" fill="#eceef0"/>
<path d="M646 548 C650 562 660 570 670 571 C675 571 678 568 680 567 C682 568 685 571 690 571 C700 570 710 562 714 548 C706 556 700 560 680 561 C660 560 654 556 646 548 Z" fill="url(#chin)"/>
<!-- lips -->
<path d="M634 536.500 C640 532 650 522 660 517 C664 515 668 515 671 515.500 C675 516 678 517 680 518 C682 517 686 515.500 691 515.500 C696 515.500 700 517 704 520 C711 526 716 531 720.500 533.500 C716 538 710 539 704 538.700 C700 538.500 696 537 693.500 535 C688 532 674 532 668 535 C664 537.500 660 539 654 539.500 C648 540 640 539.500 634 536.500 Z" fill="url(#lip)"/>
<path d="M637 538.500 C644 541 652 541 660 540 C666 539 672 538.500 680 538.500 C688 538.500 696 539 702 540 C708 540.500 714 539.500 718 537 C714 546 709 552 702.500 556 C696 559.500 688 560.500 680 560.500 C672 560.500 664 559.500 657.500 556 C649 551 642 545 637 538.500 Z" fill="url(#lip2)"/>
<path d="M667 536 C672 532.500 689 532.500 694 536 C689 538.800 672 538.800 667 536 Z" fill="#fff"/>
<path d="M633.500 534 C635 538 640 540 650 540.500 C656 540.500 662 539.500 667 537" fill="none" stroke="#1a0800" stroke-width="1.500" stroke-linecap="round"/>
<path d="M721 531.500 C720 536 716 538.500 708 539 C702 539 698 538 694 536.500" fill="none" stroke="#1a0800" stroke-width="1.400" stroke-linecap="round"/>
<path d="M685 521 l1 5 M689 520 l1.500 6 M693 522 l1 4" stroke="#ffc4a4" stroke-width="1.300" stroke-linecap="round" opacity=".9"/>
<path d="M689 550 C695 551 700 548 704 545.500 C701 550 696 553.500 690 553 Z" fill="#ffccb0"/>
<!-- glasses -->
<path d="M539 366 C537 395 537 425 540 442 C544 460 556 472 575 478 C595 483 622 482 638 473 C652 464 660 447 667 432 C671 426 676 423 680 423 C686 424 691 430 695 436 C703 452 716 466 736 475 C752 484 776 493 794 480 C805 470 811 450 814.500 432 C817.500 412 817.500 392 812 378 C809 369 800 365 784 365 C770 364 755 365 745 366 C730 368 710 373 691 378 L680 372 L600 360 Z" fill="#9da2a7" transform="translate(0 3.500)"/>
<path d="M539 366 C537 395 537 425 540 442 C544 460 556 472 575 478 C595 483 622 482 638 473 C652 464 660 447 667 432 C671 426 676 423 680 423 C686 424 691 430 695 436 C703 452 716 466 736 475 C752 484 776 493 794 480 C805 470 811 450 814.500 432 C817.500 412 817.500 392 812 378 C809 369 800 365 784 365 C770 364 755 365 745 366 C730 368 710 373 691 378 L680 372 L600 360 Z" fill="#fff"/>
<path d="M540.5 367 C539 395 539 424 542 441 C546 458 558 469.5 576 475.5 C596 480.5 621 479.5 636.5 471 C649.5 463 658 446 665 430.5 C669 424 675 420.5 680 420.5 C687 420 693 426 698 434 C706 450 718 462 737 471 C752 480 774 488.500 791 476 C800 467 806 449 809.500 431 C812.500 412 812.500 394 808 381 C806 373 798 369 784 369 C770 368 755 369 746 370 C731 372 711 377 693 382 L680 376 L600 364 Z" fill="url(#gg)"/>
<g clip-path="url(#cg)">
<path d="M600.0 416.0 L600.3 416.2 L600.5 416.6 L600.6 416.9 L600.7 417.3 L600.7 417.7 L600.6 418.2 L600.3 418.6 L600.0 419.0 L599.6 419.3 L599.2 419.6 L598.6 419.8 L598.0 420.0 L597.3 420.0 L596.6 420.0 L595.9 419.8 L595.2 419.5 L594.5 419.0 L593.8 418.5 L593.2 417.8 L592.6 417.0 L592.2 416.2 L591.9 415.2 L591.6 414.1 L591.6 413.0 L591.7 411.9 L591.9 410.7 L592.3 409.5 L592.9 408.4 L593.6 407.3 L594.5 406.3 L595.6 405.3 L596.8 404.5 L598.1 403.9 L599.6 403.4 L601.1 403.0 L602.8 402.9 L604.4 403.0 L606.1 403.3 L607.8 403.8 L609.4 404.5 L611.0 405.5 L612.5 406.6 L613.9 408.0 L615.1 409.6 L616.1 411.3 L616.9 413.2 L617.5 415.2 L617.8 417.4 L617.9 419.6 L617.7 421.8 L617.2 424.0 L616.4 426.2 L615.4 428.3 L614.0 430.4 L612.4 432.2 L610.6 433.9 L608.5 435.4 L606.3 436.7 L603.8 437.6 L601.2 438.3 L598.5 438.6 L595.7 438.7 L592.9 438.3 L590.2 437.7 L587.4 436.7 L584.8 435.3 L582.4 433.6 L580.1 431.6 L578.0 429.3 L576.3 426.7 L574.8 423.9 L573.7 420.9 L572.9 417.8 L572.5 414.5 L572.5 411.1 L573.0 407.8 L573.8 404.4 L575.0 401.2 L576.7 398.1 L578.7 395.2 L581.2 392.5 L583.9 390.1 L587.0 388.0 L590.3 386.3 L593.9 385.0 L597.6 384.1 L601.4 383.7 L605.4 383.7 L609.3 384.2 L613.2 385.2 L617.0 386.7 L620.6 388.6 L623.9 391.0 L627.0 393.8 L629.8 397.0 L632.2 400.6 L634.2 404.4 L635.7 408.5 L636.7 412.8 L637.2 417.3 L637.1 421.7 L636.5 426.3 L635.4 430.7 L633.7 435.0 L631.5 439.1 L628.8 443.0 L625.6 446.5 L621.9 449.7 L617.9 452.4 L613.5 454.6 L608.9 456.3 L604.0 457.5 L599.0 458.0 L594.0 458.0 L588.9 457.3 L583.9 456.0 L579.0 454.1 L574.4 451.7 L570.1 448.6 L566.1 445.0 L562.5 441.0 L559.5 436.5 L557.0 431.6 L555.1 426.4 L553.8 421.0 L553.1 415.4 L553.2 409.8 L553.9 404.1 L555.3 398.6 L557.4 393.2 L560.1 388.0 L563.5 383.2 L567.4 378.8 L571.9 374.8 L576.9 371.4 L582.2 368.6 L587.9 366.5 L593.9 365.0 L600.1 364.3 L606.3 364.3 L612.5 365.1 L618.7 366.6 L624.6 368.8 L630.3 371.8 L635.6 375.5 L640.5 379.8 L644.8 384.7 L648.6 390.1 L651.7 396.0 L654.1 402.2 L655.7 408.7 L656.5 415.5 L656.6 422.3 L655.8 429.1 L654.2 435.8 L651.7 442.3 L648.5 448.5 L644.6 454.3 L639.9 459.7 L634.6 464.4 L628.7 468.6 L622.4 472.0 L615.6 474.6 L608.5 476.4 L601.2 477.4 L593.9 477.4 L586.5 476.6 L579.2 474.9 L572.1 472.3 L565.4 468.9 L559.0 464.7 L553.2 459.7 L548.0 454.0 L543.5 447.7 L539.8 440.8 L536.9 433.5 L534.9 425.9 L533.8 418.1 L533.7 410.1 L534.5 402.1 L536.3 394.3 L539.0 386.6 L542.6 379.3 L547.2 372.5 L552.5 366.2 L558.6 360.6 L565.3 355.7 L572.6 351.6 L569.2 343.6 L560.9 348.1 L553.3 353.6 L546.4 359.9 L540.4 366.9 L535.3 374.6 L531.1 382.8 L528.0 391.4 L525.9 400.3 L524.9 409.3 L525.1 418.3 L526.2 427.2 L528.5 435.9 L531.7 444.2 L535.9 452.0 L541.0 459.1 L546.8 465.6 L553.4 471.4 L560.6 476.2 L568.2 480.2 L576.3 483.2 L584.6 485.2 L593.0 486.2 L601.4 486.1 L609.8 485.1 L617.9 483.1 L625.6 480.1 L632.9 476.2 L639.7 471.6 L645.8 466.1 L651.2 460.0 L655.8 453.4 L659.5 446.3 L662.4 438.8 L664.3 431.1 L665.3 423.2 L665.3 415.4 L664.4 407.6 L662.6 400.1 L659.9 392.8 L656.3 386.0 L652.0 379.7 L647.0 374.0 L641.4 368.9 L635.3 364.6 L628.7 361.1 L621.8 358.4 L614.6 356.6 L607.4 355.6 L600.1 355.5 L592.9 356.3 L585.9 358.0 L579.2 360.4 L572.8 363.6 L567.0 367.6 L561.7 372.2 L557.0 377.3 L552.9 383.0 L549.7 389.0 L547.1 395.4 L545.4 401.9 L544.5 408.6 L544.4 415.3 L545.1 422.0 L546.5 428.4 L548.7 434.6 L551.7 440.4 L555.3 445.8 L559.4 450.7 L564.1 455.1 L569.3 458.8 L574.8 461.8 L580.6 464.2 L586.6 465.8 L592.7 466.7 L598.8 466.8 L604.9 466.2 L610.8 464.9 L616.4 462.9 L621.8 460.2 L626.7 457.0 L631.2 453.2 L635.1 449.0 L638.5 444.3 L641.3 439.3 L643.5 434.1 L645.0 428.6 L645.8 423.1 L645.9 417.5 L645.4 412.1 L644.3 406.7 L642.5 401.6 L640.1 396.8 L637.2 392.3 L633.8 388.3 L630.0 384.7 L625.8 381.6 L621.3 379.1 L616.6 377.2 L611.7 375.8 L606.8 375.1 L601.8 374.9 L596.9 375.4 L592.2 376.4 L587.6 378.0 L583.3 380.1 L579.3 382.6 L575.7 385.6 L572.5 389.0 L569.7 392.8 L567.5 396.7 L565.8 400.9 L564.6 405.2 L563.9 409.6 L563.8 414.0 L564.2 418.3 L565.1 422.5 L566.4 426.6 L568.3 430.3 L570.6 433.8 L573.2 437.0 L576.2 439.8 L579.4 442.2 L582.9 444.2 L586.5 445.7 L590.3 446.7 L594.1 447.3 L597.9 447.4 L601.7 447.0 L605.3 446.2 L608.8 445.0 L612.1 443.4 L615.1 441.5 L617.8 439.2 L620.2 436.6 L622.2 433.8 L623.8 430.8 L624.9 427.6 L625.6 424.4 L625.9 421.2 L625.8 418.0 L625.3 414.9 L624.5 412.0 L623.3 409.2 L621.8 406.7 L620.1 404.4 L618.1 402.4 L616.0 400.7 L613.7 399.3 L611.3 398.3 L608.9 397.5 L606.4 397.1 L604.0 397.0 L601.7 397.2 L599.4 397.7 L597.3 398.4 L595.4 399.4 L593.6 400.5 L592.1 401.9 L590.8 403.4 L589.7 405.0 L588.8 406.6 L588.3 408.3 L587.9 410.0 L587.8 411.7 L587.9 413.3 L588.2 414.8 L588.7 416.2 L589.3 417.5 L590.1 418.7 L591.0 419.6 L592.0 420.4 L593.0 421.0 L594.0 421.5 L595.1 421.7 L596.1 421.8 L597.1 421.8 L598.0 421.6 L598.8 421.3 L599.5 420.8 L600.0 420.3 L600.5 419.7 L600.8 419.1 L601.0 418.5 L601.0 417.9 L600.9 417.3 L600.7 416.8 L600.4 416.4 L600.0 416.0Z" fill="#2e0834" opacity=".30"/>
<path d="M749.5 417.5 L749.3 417.2 L749.1 416.9 L749.0 416.5 L749.0 416.1 L749.1 415.7 L749.3 415.3 L749.6 414.9 L749.9 414.6 L750.4 414.3 L750.9 414.1 L751.5 413.9 L752.1 413.9 L752.8 414.0 L753.5 414.1 L754.2 414.4 L754.8 414.8 L755.5 415.4 L756.0 416.0 L756.5 416.8 L756.9 417.6 L757.2 418.6 L757.4 419.6 L757.5 420.6 L757.3 421.8 L757.1 422.9 L756.7 424.0 L756.1 425.1 L755.3 426.1 L754.4 427.1 L753.4 428.0 L752.2 428.7 L750.9 429.3 L749.4 429.8 L747.9 430.0 L746.3 430.1 L744.7 430.0 L743.1 429.7 L741.4 429.1 L739.9 428.3 L738.4 427.4 L737.0 426.2 L735.7 424.8 L734.6 423.2 L733.6 421.5 L732.9 419.6 L732.4 417.6 L732.1 415.5 L732.1 413.3 L732.4 411.2 L733.0 409.0 L733.8 406.9 L734.9 404.8 L736.3 402.9 L737.9 401.1 L739.8 399.5 L741.9 398.1 L744.1 397.0 L746.6 396.1 L749.2 395.6 L751.8 395.3 L754.6 395.4 L757.3 395.8 L760.0 396.5 L762.6 397.6 L765.2 399.1 L767.5 400.8 L769.7 402.9 L771.6 405.2 L773.3 407.8 L774.6 410.6 L775.6 413.6 L776.3 416.8 L776.5 420.0 L776.4 423.3 L775.9 426.6 L774.9 429.9 L773.6 433.0 L771.8 436.1 L769.7 438.9 L767.2 441.4 L764.4 443.7 L761.3 445.6 L757.9 447.2 L754.4 448.4 L750.7 449.1 L746.9 449.4 L743.0 449.2 L739.1 448.5 L735.3 447.4 L731.6 445.8 L728.1 443.8 L724.9 441.3 L721.9 438.4 L719.3 435.1 L717.1 431.5 L715.3 427.6 L713.9 423.5 L713.1 419.2 L712.8 414.8 L713.0 410.4 L713.7 406.0 L715.0 401.6 L716.9 397.4 L719.2 393.4 L722.1 389.7 L725.4 386.3 L729.1 383.3 L733.2 380.8 L737.6 378.7 L742.2 377.2 L747.1 376.3 L752.0 375.9 L757.1 376.2 L762.1 377.0 L767.0 378.5 L771.7 380.5 L776.2 383.1 L780.4 386.3 L784.2 390.0 L787.6 394.2 L790.4 398.8 L792.7 403.7 L794.4 408.9 L795.5 414.3 L795.9 419.8 L795.7 425.5 L794.8 431.0 L793.2 436.5 L790.9 441.8 L788.0 446.8 L784.5 451.4 L780.4 455.7 L775.8 459.4 L770.7 462.6 L765.3 465.2 L759.6 467.1 L753.6 468.3 L747.5 468.8 L741.3 468.6 L735.1 467.6 L729.1 465.8 L723.3 463.4 L717.7 460.2 L712.6 456.3 L707.9 451.9 L703.8 446.9 L700.3 441.3 L697.4 435.4 L695.3 429.1 L693.9 422.6 L693.4 415.9 L693.6 409.1 L694.6 402.4 L696.5 395.8 L699.1 389.4 L702.6 383.4 L706.7 377.7 L711.5 372.6 L717.0 368.1 L723.0 364.2 L729.4 361.1 L736.2 358.7 L743.3 357.2 L750.6 356.5 L757.9 356.7 L765.3 357.8 L772.4 359.8 L779.4 362.6 L785.9 366.3 L792.1 370.7 L797.6 375.9 L802.6 381.8 L806.8 388.2 L810.2 395.1 L812.8 402.5 L814.6 410.1 L815.3 418.0 L815.2 425.9 L814.1 433.8 L812.0 441.5 L809.0 449.0 L805.1 456.1 L800.4 462.8 L794.8 468.8 L788.6 474.2 L781.7 478.8 L774.2 482.5 L766.4 485.4 L768.5 493.9 L777.4 490.7 L785.7 486.5 L793.5 481.4 L800.6 475.4 L806.9 468.6 L812.3 461.1 L816.7 453.1 L820.2 444.7 L822.6 435.9 L823.9 427.0 L824.1 418.0 L823.3 409.1 L821.4 400.5 L818.5 392.1 L814.6 384.2 L809.8 376.9 L804.3 370.2 L797.9 364.2 L791.0 359.1 L783.5 354.9 L775.7 351.6 L767.5 349.3 L759.2 348.0 L750.8 347.7 L742.4 348.5 L734.3 350.2 L726.5 352.8 L719.1 356.4 L712.2 360.8 L705.9 365.9 L700.3 371.8 L695.5 378.2 L691.5 385.1 L688.4 392.5 L686.2 400.1 L684.9 407.8 L684.6 415.6 L685.2 423.4 L686.7 431.0 L689.1 438.3 L692.4 445.2 L696.4 451.6 L701.2 457.5 L706.6 462.7 L712.5 467.2 L718.9 471.0 L725.7 473.9 L732.7 476.0 L739.9 477.2 L747.1 477.6 L754.3 477.0 L761.3 475.7 L768.1 473.5 L774.5 470.5 L780.5 466.8 L785.9 462.5 L790.8 457.5 L795.0 452.1 L798.5 446.2 L801.2 440.0 L803.2 433.5 L804.3 426.9 L804.7 420.3 L804.3 413.7 L803.0 407.2 L801.1 401.0 L798.4 395.1 L795.0 389.6 L791.1 384.6 L786.6 380.1 L781.6 376.2 L776.2 373.0 L770.6 370.5 L764.7 368.6 L758.7 367.5 L752.6 367.2 L746.6 367.5 L740.7 368.6 L735.0 370.4 L729.6 372.8 L724.6 375.8 L720.0 379.4 L715.9 383.5 L712.4 388.0 L709.4 392.8 L707.1 397.9 L705.4 403.3 L704.4 408.7 L704.0 414.2 L704.3 419.7 L705.3 425.0 L706.9 430.1 L709.0 435.0 L711.7 439.5 L714.9 443.7 L718.6 447.4 L722.6 450.6 L727.0 453.2 L731.6 455.3 L736.3 456.9 L741.2 457.8 L746.1 458.1 L751.0 457.9 L755.8 457.0 L760.3 455.6 L764.7 453.7 L768.7 451.3 L772.4 448.5 L775.7 445.2 L778.6 441.7 L780.9 437.8 L782.8 433.7 L784.1 429.5 L785.0 425.2 L785.3 420.9 L785.0 416.6 L784.3 412.4 L783.1 408.3 L781.4 404.5 L779.3 401.0 L776.8 397.8 L774.0 394.9 L770.8 392.4 L767.5 390.3 L763.9 388.7 L760.2 387.5 L756.5 386.8 L752.7 386.6 L749.0 386.8 L745.4 387.4 L741.9 388.5 L738.6 390.0 L735.6 391.8 L732.8 393.9 L730.4 396.4 L728.3 399.1 L726.7 402.1 L725.5 405.2 L724.7 408.3 L724.3 411.5 L724.3 414.6 L724.7 417.6 L725.4 420.5 L726.5 423.3 L727.8 425.8 L729.5 428.1 L731.3 430.1 L733.3 431.8 L735.5 433.2 L737.8 434.3 L740.2 435.1 L742.6 435.6 L744.9 435.8 L747.2 435.7 L749.4 435.3 L751.5 434.6 L753.4 433.8 L755.1 432.7 L756.6 431.4 L758.0 430.0 L759.0 428.5 L759.9 426.9 L760.5 425.3 L760.9 423.7 L761.0 422.1 L761.0 420.5 L760.7 419.0 L760.3 417.7 L759.7 416.4 L759.0 415.4 L758.1 414.4 L757.2 413.6 L756.3 413.0 L755.3 412.6 L754.3 412.4 L753.3 412.3 L752.4 412.3 L751.5 412.5 L750.8 412.8 L750.1 413.2 L749.6 413.7 L749.2 414.3 L748.9 414.9 L748.8 415.5 L748.8 416.0 L748.9 416.6 L749.2 417.1 L749.5 417.5Z" fill="#2e0834" opacity=".30"/>
<path d="M556 456 C566 467 590 475 610 474 C622 473 630 470 637 465 C626 471 610 471 596 469 C578 467 565 463 556 456 Z" fill="#f79ae6" opacity=".85"/>
<path d="M692 381 C700 378 710 375 719 374 C712 380 706 387 701 393 C697 398 694 403 692 408 C690 400 690 390 692 381 Z" fill="#ee9ae2" opacity=".75"/>
<path d="M809 396 C812 410 812 430 805 451 C806 434 808 412 809 396 Z" fill="#f9b4ec" opacity=".9"/>
<path d="M587 368.500 h24 v2.500 h-24z" fill="#f5b8ea" opacity=".8"/>
</g>
<!-- fringe hair over glasses -->
<path d="M531 340 L531 377 L540 377 C543 375 546 372 548 367 C552 371 557 376 561 378 C562 374 564 369 566 365 C569 376 573 386 582 395.500 C584 386 585.500 376 587 366 L594 368 C595 375 596 381 598 386.500 C602 380 607 373 612 368 C612 374 611 380 610.400 384.500 C614 380 619 376 624 372.500 L634 372 C636 380 641 387 646 392 C647 390 648 387 649 384 C651 389 655 393 660 396 C666 400 674 401 680 398 C685 395 688 389 688.500 383 C687 387 683 390 678 391 C672 391 667 387 666 381 C665 377 665 373 665 369 C672 373 680 377 690 379.500 L691 378.500 C710 373 730 368.500 745 366.500 C755 365.500 770 364.500 784 365 C800 365 809 369 813 378 L820 380 L832 376 L832 320 L600 300 Z" fill="#ff5400"/>
<!-- yellow highlights at tips -->
<path d="M548 324 C545 338 546 358 548 367 C552 371 557 376 561 378 C562 374 564 369 566 365 C569 376 573 386 582 395.500 C584 386 585.500 376 587 366 C588 360 590 354 592 350 C590 340 584 330 576 324 C566 328 556 328 548 324 Z" fill="url(#yl)"/>
<path d="M668 362 C680 354 695 343 708 331 C705 340 700 348 694 354 C702 350 708 346 712 342 C706 354 694 364 680 367 C674 368 670 366 668 362 Z" fill="url(#yl2)"/>
<path d="M744 361 C752 348 762 326 768 306 C772 322 771 338 764 350 C768 346 772 340 774 334 C773 346 766 358 756 364 C750 366 746 364 744 361 Z" fill="url(#yl2)"/>
<path d="M548 340 C552 352 556 364 561 378 C562 374 564 369 566 365 C562 356 556 346 548 340 Z" fill="#ff8a04" opacity=".8"/>
<path d="M612 342 C618 354 626 364 634 372 C636 380 641 387 646 392 C644 380 644 368 648 358 C636 356 622 350 612 342 Z" fill="#ff8c04" opacity=".5"/>
<!-- dark streaks -->
<g>
<path d="M567 297 C600 296 640 284 672 262 C660 284 640 300 600 306 C585 308 574 304 567 297 Z" fill="url(#dk1)"/>
<path d="M548 335 C552 320 560 310 572 303 C566 316 562 330 562 350 C558 346 552 342 548 335 Z" fill="url(#dk2)"/>
<path d="M566 352 C568 332 578 318 594 310 C586 324 582 340 584 362 C578 360 570 358 566 352 Z" fill="url(#dk2)"/>
<path d="M588 322 C610 318 640 308 662 292 C652 316 630 336 604 348 C598 340 592 332 588 322 Z" fill="url(#dk1)"/>
<path d="M604 352 C630 344 664 326 688 300 C684 330 664 354 634 368 C626 366 612 360 604 352 Z" fill="url(#dk1)"/>
<path d="M640 372 C664 362 690 344 706 318 C706 344 694 364 672 378 C664 380 650 378 640 372 Z" fill="url(#dk1)"/>
<path d="M700 240 C716 262 722 292 714 322 C710 334 704 342 698 348 C708 320 710 290 702 262 C700 254 700 246 700 240 Z" fill="#b83600" opacity=".45"/>
<path d="M706 278 C722 282 738 280 752 272 C746 296 736 318 716 336 C716 316 714 296 706 278 Z" fill="url(#dk2)"/>
<path d="M726 336 C744 322 758 304 764 282 C772 302 768 326 752 346 C742 350 732 346 726 336 Z" fill="url(#dk1)"/>
<path d="M776 300 C790 304 802 300 812 292 C816 314 812 338 800 358 C790 354 784 346 780 338 C784 326 782 312 776 300 Z" fill="url(#dk2)"/>
<path d="M640 230 C670 226 700 232 722 250 C698 240 668 236 640 238 Z" fill="#d84600" opacity=".7"/>
<path d="M584 262 C604 250 626 246 652 248 C626 252 604 260 588 272 Z" fill="#d84600" opacity=".6"/>
</g>
<!-- headphones -->
<path d="M558 258 C541 280 529 310 524.500 343 L532 343 C536 312 546 284 562 262 Z" fill="url(#hbg)"/>
<path d="M798 258 C815 280 827 310 831.500 343 L824 343 C820 312 810 284 794 262 Z" fill="url(#hbg)"/>

<g id="hp">
<rect x="524.500" y="346" width="4" height="27" fill="url(#stem)"/>
<rect x="523.500" y="342" width="11" height="5" rx="1.500" fill="url(#ring)"/>
<path d="M523.500 372 h6 l2.500 4 v4.500 h-12.500 v-4.500 z" fill="url(#conn)"/>
<rect x="502" y="399" width="16" height="40" rx="4" fill="url(#disc)"/>
<rect x="516" y="380" width="17" height="78.500" rx="4" fill="url(#cup)"/>
<rect x="516" y="380" width="17" height="78.500" rx="4" fill="url(#cupv)"/>
</g>
<use href="#hp" transform="translate(1356 1) scale(-1 1)"/>
</g>
</svg>
<!--/ART-->
<!-- scrollbars -->
<div class="abs" style="left:1224px;top:80px;width:15px;height:701px;background:linear-gradient(90deg,#c9c9c9,#f4f4f4 40%,#fff 60%,#e4e4e4)"></div>
<div class="abs" style="left:1224px;top:98px;width:15px;height:666px;background:linear-gradient(90deg,#d4d4d4,#fdfdfd 35%,#fff 65%,#dadada);border-radius:7px;box-shadow:inset 0 0 1px rgba(0,0,0,.25)"></div>
<svg class="abs" style="left:1224px;top:84px" width="15" height="14" viewBox="0 0 15 14"><path d="M7.500 4.500l3 4.500h-6z" fill="#a4a4a4"/></svg>
<svg class="abs" style="left:1224px;top:765px" width="15" height="14" viewBox="0 0 15 14"><path d="M7.500 10l3-4.500h-6z" fill="#8c8c8c"/></svg>
<!-- status bar -->
<div class="abs" style="left:50px;top:780px;width:1174px;height:16px;background:#ececec;border-top:1px solid #a8a8a8"></div>
<div class="abs" style="left:50px;top:781px;width:48px;height:15px;background:#fff;border-right:1px solid #8c8c8c"></div>
<div class="lbl" style="left:56px;top:783px">100%</div>
<div class="abs" style="left:119px;top:781px;width:1px;height:15px;background:#b4b4b4"></div>
<svg class="abs" style="left:102px;top:782px" width="14" height="14" viewBox="0 0 14 14"><circle cx="7" cy="7" r="5.500" fill="#d9d9d9" stroke="#555" stroke-width="1"/><path d="M5 4.500h3l1.500 1.500v3.500H5z" fill="#fff" stroke="#333" stroke-width=".8"/></svg>
<div class="lbl" style="left:163px;top:782px">Doc: 732,4K/4,94M</div>
<div class="abs" style="left:290px;top:781px;width:1px;height:15px;background:#8c8c8c"></div>
<svg class="abs" style="left:291px;top:782px" width="12" height="14" viewBox="0 0 12 14"><path d="M3 2l6 5-6 5z" fill="#111"/></svg>
<div class="abs" style="left:304px;top:781px;width:1px;height:15px;background:#8c8c8c"></div>
<div class="abs" style="left:305px;top:781px;width:919px;height:15px;background:linear-gradient(#c9c9c9,#f2f2f2 40%,#fff 60%,#e6e6e6)"></div>
<svg class="abs" style="left:308px;top:782px" width="12" height="14" viewBox="0 0 12 14"><path d="M3 7l6-3.500v7z" fill="#a9a9a9"/></svg>
<div class="abs" style="left:320px;top:781px;width:888px;height:15px;background:linear-gradient(#d0d0d0,#fbfbfb 35%,#fff 65%,#dcdcdc);border-radius:8px;box-shadow:inset 0 0 1px rgba(0,0,0,.25)"></div>
<svg class="abs" style="left:1210px;top:781px" width="12" height="14" viewBox="0 0 12 14"><path d="M9 7l-6-3.500v7z" fill="#a9a9a9"/></svg>
<div class="abs" style="left:1224px;top:781px;width:15px;height:15px;background:#fff"></div>
<!-- floating layers panel -->
<div class="abs" style="left:1007px;top:57px;width:211px;height:29px;background:linear-gradient(#f2f2f2,#e2e2e2);border:1px solid #bdbdbd;border-radius:4px;box-shadow:0 1px 3px rgba(0,0,0,.35)"></div>
<div class="abs" style="left:1008px;top:81px;width:209px;height:4px;background:#f3f3f3;border-top:1px solid #c4c4c4"></div>
<div class="abs tab" style="left:1143px;top:66px;width:26px;height:15px"></div>
<div class="abs tab" style="left:1117px;top:66px;width:27px;height:15px"></div>
<div class="abs tab" style="left:1092px;top:66px;width:26px;height:15px"></div>
<div class="abs tab" style="left:1064px;top:66px;width:29px;height:15px"></div>
<div class="abs" style="left:1012px;top:66px;width:54px;height:17px;background:#f3f3f3;border:1px solid #b5b5b5;border-bottom:none;border-radius:4px 4px 0 0"></div>
<div class="lbl" style="left:1019px;top:69px;color:#333;letter-spacing:0">Layers</div>
<svg class="abs" style="left:1052px;top:70px" width="10" height="10" viewBox="0 0 10 10"><path d="M1.500 1.500l7 7M8.500 1.500l-7 7" stroke="#666" stroke-width="1.100"/></svg>
<div class="lbl" style="left:1067px;top:69px;color:#333;letter-spacing:0">tory</div>
<div class="lbl" style="left:1094px;top:69px;color:#333;letter-spacing:0">nels</div>
<div class="lbl" style="left:1120px;top:69px;color:#333;letter-spacing:0">ions</div>
<div class="lbl" style="left:1145px;top:69px;color:#333;letter-spacing:0">aths</div>
<svg class="abs" style="left:1190px;top:59px" width="28" height="26" viewBox="0 0 28 26">
<path d="M2.500 3.500h6v3.500h-6z" fill="none" stroke="#555" stroke-width="1"/><path d="M2 3h7v2H2z" fill="#555"/>
<path d="M16.500 2.500l6 6M22.500 2.500l-6 6" stroke="#666" stroke-width="1.200"/>
<path d="M3 23c6 0 6-9 13-9h11v9z" fill="#f4f4f4" stroke="#c4c4c4" stroke-width=".8"/>
<path d="M9.500 17h5l-2.500 3.500z" fill="#555"/>
<path d="M16.500 15.500h6M16.500 18.500h6M16.500 21.500h6" stroke="#555" stroke-width="1.200"/>
</svg>
<div id="ltb"></div>
<div id="rdock"></div>
<!-- left toolbar -->
<svg class="abs" style="left:9px;top:86px" width="12" height="10" viewBox="0 0 12 10"><path d="M1 1l4.500 4-4.500 4zM6.500 1l4.500 4-4.500 4z" fill="#cfcfcf"/></svg>
<div class="abs" style="left:8px;top:99px;width:38px;height:643px;background:#ececec;border-radius:3px 3px 4px 4px"></div>
<div class="abs" style="left:8px;top:99px;width:38px;height:9px;background:linear-gradient(#fafafa,#d4d4d4);border-radius:3px 3px 0 0;border-bottom:1px solid #bcbcbc"></div>
<div class="abs" style="left:9px;top:109px;width:36px;height:22px;background:linear-gradient(#1a78c8,#0b5aa6 55%,#063f80)"></div>
<div class="abs" style="left:18px;top:111px;font-size:16px;font-weight:bold;color:#fff;letter-spacing:-0.3px;transform:scaleX(.92);transform-origin:0 0">Ps</div>
<div class="abs" style="left:14px;top:157px;width:26px;height:20px;background:#8c8c8c;border:1px solid #777;border-radius:3px"></div>
<svg class="abs" style="left:14px;top:157px" width="26" height="20" viewBox="0 0 26 20"><rect x="4.500" y="4.500" width="16" height="12" fill="none" stroke="#222" stroke-width="1" stroke-dasharray="3 2"/><path d="M24.500 18.500v-3.500l-3.500 3.500z" fill="#222"/></svg>
<div class="abs hs" style="top:270px"></div><div class="abs hs" style="top:452px"></div><div class="abs hs" style="top:546px"></div>
<div class="abs" style="left:18px;top:387px;width:16px;height:12px;background:linear-gradient(90deg,#fff,#111);border:1px solid #555;box-shadow:1px 1px 0 #999"></div>
<svg class="abs" style="left:34px;top:398px" width="5" height="5"><path d="M4 4.500v-3.500l-3.500 3.500z" fill="#222"/></svg>
<div class="abs" style="left:19px;top:476px;font-family:'Liberation Serif',serif;font-size:22px;color:#111;line-height:22px">T</div>
<svg class="abs" style="left:34px;top:493px" width="5" height="5"><path d="M4 4.500v-3.500l-3.500 3.500z" fill="#222"/></svg>
<svg class="abs" style="left:13px;top:133px" width="26" height="22" viewBox="0 0 26 22"><path d="M5 3.500v10.500l3.200-3h4.600z" fill="#111"/><path d="M16.500 10.500v9M12 15h9" stroke="#222" stroke-width="1.100"/><path d="M16.500 9.500l-2 2.500h4zM16.500 20.500l-2-2.500h4zM11 15l2.500-2v4zM22 15l-2.500-2v4z" fill="#222"/></svg><svg class="abs" style="left:13px;top:177px" width="26" height="22" viewBox="0 0 26 22"><defs><linearGradient id="gb"><stop offset="0" stop-color="#fff"/><stop offset="1" stop-color="#bbb"/></linearGradient></defs><path d="M6.500 3.500l6 4 5.500-4-2 8.500-7.500 1.500z" fill="#e8e8e8" stroke="#222" stroke-width="1.100"/><path d="M9 13.500c-1.500 1-1.500 3 0 4.500M9 13.500c1.200 1.200 1 2.800-.500 3.800" stroke="#222" stroke-width="1" fill="none"/><path d="M23 20v-3.500l-3.500 3.500z" fill="#222"/></svg><svg class="abs" style="left:13px;top:200px" width="26" height="22" viewBox="0 0 26 22"><defs><linearGradient id="gb"><stop offset="0" stop-color="#fff"/><stop offset="1" stop-color="#bbb"/></linearGradient></defs><circle cx="8.500" cy="8" r="3.200" fill="none" stroke="#555" stroke-width="1" stroke-dasharray="1.500 1.200"/><path d="M9.500 6.500l10 10-1.800 1.800-10-10z" fill="#ddd" stroke="#222" stroke-width="1"/><path d="M16.500 13.500l3 3-1.800 1.800-3-3z" fill="#222"/><path d="M23 20v-3.500l-3.500 3.500z" fill="#222"/></svg><svg class="abs" style="left:13px;top:222px" width="26" height="22" viewBox="0 0 26 22"><defs><linearGradient id="gb"><stop offset="0" stop-color="#fff"/><stop offset="1" stop-color="#bbb"/></linearGradient></defs><path d="M9.500 2.500v14h11M5 6.500h12v13" fill="none" stroke="#1a1a1a" stroke-width="1.700"/><path d="M8.500 17.500l11-12" stroke="#111" stroke-width="1"/></svg><svg class="abs" style="left:13px;top:244px" width="26" height="22" viewBox="0 0 26 22"><defs><linearGradient id="gb"><stop offset="0" stop-color="#fff"/><stop offset="1" stop-color="#bbb"/></linearGradient></defs><path d="M6 17.500l11.500-9 2-4.500-1.500 0-12 13.500z" fill="#ddd" stroke="#222" stroke-width="1"/><path d="M11.500 11.500l8 3" stroke="#222" stroke-width="1.200"/><path d="M17 9l3-5" stroke="#222" stroke-width="2.200"/><path d="M23 20v-3.500l-3.500 3.500z" fill="#222"/></svg><svg class="abs" style="left:13px;top:273px" width="26" height="22" viewBox="0 0 26 22"><defs><linearGradient id="gb"><stop offset="0" stop-color="#fff"/><stop offset="1" stop-color="#bbb"/></linearGradient></defs><g transform="rotate(-38 13 11)"><rect x="3.500" y="7" width="19" height="8" rx="4" fill="#cfcfcf" stroke="#333" stroke-width="1"/><rect x="9.500" y="7.500" width="7" height="7" fill="#999"/><path d="M11 9.500h.1M13 9.500h.1M15 9.500h.1M11 12.500h.1M13 12.500h.1M15 12.500h.1" stroke="#fff" stroke-width="1.200" stroke-linecap="round"/></g><circle cx="8" cy="14" r="4.500" fill="none" stroke="#444" stroke-width=".9" stroke-dasharray="1.300 1.300"/><path d="M23 20v-3.500l-3.500 3.500z" fill="#222"/></svg><svg class="abs" style="left:13px;top:295px" width="26" height="22" viewBox="0 0 26 22"><defs><linearGradient id="gb"><stop offset="0" stop-color="#fff"/><stop offset="1" stop-color="#bbb"/></linearGradient></defs><path d="M18.500 3l2.500 2.500-9.500 9.500-3-2.500z" fill="#e6e6e6" stroke="#222" stroke-width="1"/><path d="M8.500 12.500l3 2.500-5.500 3.500z" fill="#222"/><path d="M16.500 5l2.500 2.500" stroke="#222" stroke-width="1"/><path d="M23 20v-3.500l-3.500 3.500z" fill="#222"/></svg><svg class="abs" style="left:13px;top:317px" width="26" height="22" viewBox="0 0 26 22"><defs><linearGradient id="gb"><stop offset="0" stop-color="#fff"/><stop offset="1" stop-color="#bbb"/></linearGradient></defs><circle cx="13" cy="5.500" r="2.800" fill="#777" stroke="#222" stroke-width="1"/><path d="M11.800 8h2.400l.5 4h-3.400z" fill="#888" stroke="#222" stroke-width=".8"/><path d="M6.500 12.500h13v3.500h-13z" fill="#ddd" stroke="#222" stroke-width="1"/><path d="M6 18.500h14" stroke="#222" stroke-width="1.600"/><path d="M11 14l2 2 2-2z" fill="#222"/><path d="M23 20v-3.500l-3.500 3.500z" fill="#222"/></svg><svg class="abs" style="left:13px;top:338px" width="26" height="22" viewBox="0 0 26 22"><defs><linearGradient id="gb"><stop offset="0" stop-color="#fff"/><stop offset="1" stop-color="#bbb"/></linearGradient></defs><path d="M19 3l2 2-8.500 9.500-3-2.500z" fill="#e6e6e6" stroke="#222" stroke-width="1"/><path d="M9.500 12l3 2.500-6 3.500z" fill="#222"/><path d="M6 8.500c2-4.500 8-4.500 9.500-1M6 8.500l-.5-3.500M6 8.500l3.500-.5" fill="none" stroke="#222" stroke-width="1.200"/><path d="M14 16.500a4 4 0 0 0 4-4" fill="none" stroke="#555" stroke-width=".9" stroke-dasharray="1.200 1.200"/><path d="M23 20v-3.500l-3.500 3.500z" fill="#222"/></svg><svg class="abs" style="left:13px;top:361px" width="26" height="22" viewBox="0 0 26 22"><defs><linearGradient id="gb"><stop offset="0" stop-color="#fff"/><stop offset="1" stop-color="#bbb"/></linearGradient></defs><path d="M5.500 14.500l8-8.500h7.500l-8 8.500z" fill="#f4f4f4" stroke="#222" stroke-width="1"/><path d="M5.500 14.500v3h7.500l8-8.500v-3l-8 8.500z" fill="#cfcfcf" stroke="#222" stroke-width="1"/><path d="M23 20v-3.500l-3.500 3.500z" fill="#222"/></svg><svg class="abs" style="left:13px;top:404px" width="26" height="22" viewBox="0 0 26 22"><defs><linearGradient id="gb"><stop offset="0" stop-color="#fff"/><stop offset="1" stop-color="#bbb"/></linearGradient></defs><path d="M13 3.500l5 14c-2.500 1.200-7.500 1.200-10 0z" fill="url(#gb)" stroke="#555" stroke-width="1"/><path d="M23 20v-3.500l-3.500 3.500z" fill="#222"/></svg><svg class="abs" style="left:13px;top:427px" width="26" height="22" viewBox="0 0 26 22"><defs><linearGradient id="gb"><stop offset="0" stop-color="#fff"/><stop offset="1" stop-color="#bbb"/></linearGradient></defs><ellipse cx="12.500" cy="11" rx="8" ry="6" fill="#e4e4e4" stroke="#333" stroke-width="1.100"/><path d="M7 12c1-3 5-4.500 8-3.500 3 1 4 3 3 5" fill="none" stroke="#555" stroke-width="1"/><ellipse cx="10" cy="12.500" rx="3" ry="2" fill="#f8f8f8" stroke="#444" stroke-width=".8"/><path d="M23 20v-3.500l-3.500 3.500z" fill="#222"/></svg><svg class="abs" style="left:13px;top:454px" width="26" height="22" viewBox="0 0 26 22"><defs><linearGradient id="gb"><stop offset="0" stop-color="#fff"/><stop offset="1" stop-color="#bbb"/></linearGradient></defs><path d="M13 2.500l4 7.500-2 5h-4l-2-5z" fill="#e8e8e8" stroke="#111" stroke-width="1.200"/><path d="M13 4v6" stroke="#111" stroke-width="1"/><circle cx="13" cy="10.500" r="1.200" fill="#111"/><path d="M10.500 15.500h5v3.500h-5z" fill="#111"/><path d="M23 20v-3.500l-3.500 3.500z" fill="#222"/></svg><svg class="abs" style="left:13px;top:498px" width="26" height="22" viewBox="0 0 26 22"><defs><linearGradient id="gb"><stop offset="0" stop-color="#fff"/><stop offset="1" stop-color="#bbb"/></linearGradient></defs><path d="M9 3v13l3-3 2.500 5.500 2.200-1-2.500-5.200h4.300z" fill="#111" stroke="#111" stroke-width=".6"/><path d="M23 20v-3.500l-3.500 3.500z" fill="#222"/></svg><svg class="abs" style="left:13px;top:520px" width="26" height="22" viewBox="0 0 26 22"><defs><linearGradient id="gb"><stop offset="0" stop-color="#fff"/><stop offset="1" stop-color="#bbb"/></linearGradient></defs><path d="M5 3.500l15 15" stroke="#111" stroke-width="1.600"/><path d="M23 20v-3.500l-3.500 3.500z" fill="#222"/></svg><svg class="abs" style="left:13px;top:547px" width="26" height="22" viewBox="0 0 26 22"><defs><linearGradient id="gb"><stop offset="0" stop-color="#fff"/><stop offset="1" stop-color="#bbb"/></linearGradient></defs><path d="M6.500 2.500h13v12l-4 4h-9z" fill="#f8f8f8" stroke="#333" stroke-width="1"/><path d="M19.500 14.500h-4v4" fill="#ccc" stroke="#333" stroke-width="1"/><path d="M9 6h8M9 8.500h8M9 11h8M9 13.500h4" stroke="#888" stroke-width=".9"/><path d="M24 20v-3.500l-3.500 3.500z" fill="#222"/></svg><svg class="abs" style="left:13px;top:569px" width="26" height="22" viewBox="0 0 26 22"><defs><linearGradient id="gb"><stop offset="0" stop-color="#fff"/><stop offset="1" stop-color="#bbb"/></linearGradient></defs><path d="M15.500 7.500l2.500 2.500-8.500 8.500-3.500 1 1-3.500z" fill="#eee" stroke="#222" stroke-width="1"/><path d="M14 6l5.500 5.500" stroke="#111" stroke-width="2"/><path d="M16.500 8.500l3-4.500c1-1.200 3 .5 1.800 1.800z" fill="#111" stroke="#111" stroke-width="1.200"/><path d="M23 20v-3.500l-3.500 3.500z" fill="#222"/></svg><svg class="abs" style="left:13px;top:591px" width="26" height="22" viewBox="0 0 26 22"><defs><linearGradient id="gb"><stop offset="0" stop-color="#fff"/><stop offset="1" stop-color="#bbb"/></linearGradient></defs><path d="M8 12.500l-2.500-3c-1-1.200.8-2.400 1.800-1.300l1.700 1.800v-5.500c0-1.400 2-1.400 2 0v-1.500c0-1.400 2.200-1.400 2.200 0v1c0-1.300 2.100-1.300 2.100 0v1.500c0-1.200 2-1.200 2 0v8c0 3-1.500 5-4.500 5h-1.500c-2 0-3-1.200-4.300-3z" fill="#fff" stroke="#222" stroke-width="1.100" stroke-linejoin="round"/><path d="M11 10v-5.500M13.200 10v-6.500M15.300 10v-5.500" stroke="#222" stroke-width=".9"/></svg><svg class="abs" style="left:13px;top:614px" width="26" height="22" viewBox="0 0 26 22"><defs><linearGradient id="gb"><stop offset="0" stop-color="#fff"/><stop offset="1" stop-color="#bbb"/></linearGradient></defs><circle cx="10.500" cy="9" r="5.200" fill="#f2f2f2" stroke="#222" stroke-width="1.500"/><path d="M14.500 13l5.500 5.500" stroke="#111" stroke-width="2.600" stroke-linecap="round"/></svg>
<svg class="abs" style="left:11px;top:640px" width="32" height="13" viewBox="0 0 32 13">
<rect x="5.500" y="4.500" width="6" height="6" fill="#fff" stroke="#222" stroke-width="1"/><rect x="2" y="1" width="6" height="6" fill="#111"/>
<path d="M20 6.500c0-3 3-4.500 5.500-3M27.500 6c0 3-3 4.500-5.500 3" fill="none" stroke="#111" stroke-width="1.300"/><path d="M18 5.500h4.500l-2.200 3zM25.200 7h4.500l-2.200-3z" fill="#111"/>
</svg>
<div class="abs" style="left:21px;top:666px;width:22px;height:22px;background:#fff;border:1px solid #d0d0d0;box-shadow:0 0 0 1px #f4f4f4"></div>
<div class="abs" style="left:11px;top:657px;width:21px;height:21px;background:#000;border:1px solid #e8e8e8"></div>
<svg class="abs" style="left:17px;top:694px" width="20" height="14" viewBox="0 0 20 14"><rect x="1.500" y="1.500" width="17" height="11" fill="#fff" stroke="#222" stroke-width="1"/><circle cx="10" cy="7" r="3.800" fill="#e0e0e0" stroke="#222" stroke-width="1"/></svg>
<div class="abs" style="left:15px;top:715px;width:25px;height:22px;background:linear-gradient(#fafafa,#dedede);border:1px solid #a9a9a9;border-radius:3px"></div>
<div class="abs" style="left:19px;top:719px;width:16px;height:13px;background:linear-gradient(#cfe6ff,#7fc0ff 55%,#b4dcff);border:1px solid #2f6fb0;border-top:3px solid #3d78b8"></div>
<svg class="abs" style="left:35px;top:732px" width="5" height="5"><path d="M4 4.500v-3.500l-3.500 3.500z" fill="#222"/></svg>

<!-- right dock -->
<svg class="abs" style="left:1245px;top:85px" width="26" height="13" viewBox="0 0 26 13"><path d="M2.500 1v11M5 1v11M7.500 1v11" stroke="#9a9a9a" stroke-width="1"/><path d="M18 2l-4.500 4 4.500 4zM23.500 2l-4.500 4 4.500 4z" fill="#d0d0d0"/></svg>
<div class="abs rg" style="top:99px;height:42px"></div><div class="abs rgh" style="top:99px"></div>
<div class="abs rg" style="top:142px;height:68px"></div><div class="abs rgh" style="top:142px"></div>
<div class="abs rg" style="top:212px;height:41px"></div><div class="abs rgh" style="top:212px"></div>
<div class="abs rb" style="top:113px"></div>
<div class="abs rb" style="top:156px"></div>
<div class="abs rb" style="top:183px"></div>
<div class="abs rb" style="top:226px"></div>
<svg class="abs" style="left:1245px;top:113px" width="22" height="23" viewBox="0 0 22 23">
<path d="M4 18.500l10-11" stroke="#111" stroke-width="3" stroke-linecap="round"/><path d="M13 8.500l4.500-5" stroke="#999" stroke-width="1.600"/>
<path d="M17.500 18.500l-9-10" stroke="#111" stroke-width="2" stroke-linecap="round"/><path d="M4 5.500a3.200 3.200 0 0 0 5.500 2.500a3.200 3.200 0 0 0-1-5l-.5 2.500-2 .5z" fill="#111"/></svg>
<svg class="abs" style="left:1245px;top:156px" width="22" height="23" viewBox="0 0 22 23">
<path d="M7.500 11.500h8v8h-8z" fill="#fff" stroke="#111" stroke-width="1.800"/><path d="M9.500 11l-2-6M11.500 11v-7.500M13.500 11l3-5" stroke="#111" stroke-width="1.600"/><circle cx="7" cy="5" r="1.800" fill="#111"/><path d="M10.500 3h2v3h-2z" fill="#111"/><path d="M15.500 4l2.500 1.500-1.500 2z" fill="#111"/></svg>
<svg class="abs" style="left:1245px;top:183px" width="22" height="23" viewBox="0 0 22 23">
<path d="M3 5h4M3 7.500h4M3 10h4" stroke="#111" stroke-width="1.200" stroke-dasharray="1.200 1"/>
<circle cx="12.500" cy="6.500" r="3" fill="#777" stroke="#111" stroke-width="1"/><path d="M11.300 9h2.400l.5 4h-3.400z" fill="#777" stroke="#111" stroke-width=".8"/><path d="M5.500 13.500h14v3.500h-14z" fill="#ddd" stroke="#111" stroke-width="1.200"/><path d="M5 19.500h15" stroke="#111" stroke-width="1.800"/><path d="M10.500 15l2 2 2-2z" fill="#111"/></svg>
<svg class="abs" style="left:1245px;top:226px" width="22" height="23" viewBox="0 0 22 23">
<rect x="3.500" y="4.500" width="15" height="14" fill="#f4f4f4" stroke="#111" stroke-width="1.400"/><path d="M6 7.500h10M6 10h10" stroke="#555" stroke-width="1"/><rect x="6" y="12.500" width="10" height="3.500" fill="#333"/></svg>

</div>
</body></html>
